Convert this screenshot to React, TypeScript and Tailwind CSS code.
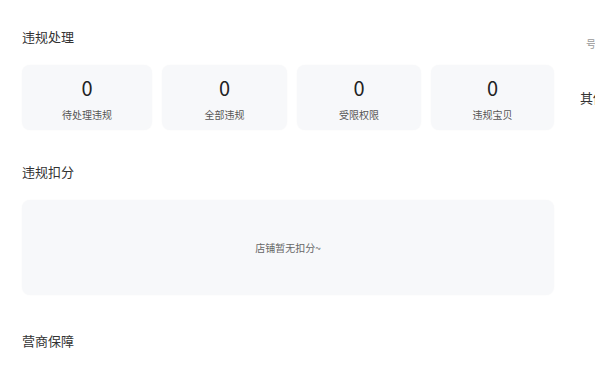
const stats = [
  { value: 0, label: "待处理违规", w: "w-[130px]" },
  { value: 0, label: "全部违规", w: "w-[125px]" },
  { value: 0, label: "受限权限", w: "w-[124px]" },
  { value: 0, label: "违规宝贝", w: "w-[123px]" },
];

const font = {
  fontFamily: '"Noto Sans CJK SC", "Noto Sans", sans-serif',
};

function SectionTitle({ children }: { children: React.ReactNode }) {
  return (
    <h2 className="text-[13px] leading-[20px] text-[#333]">{children}</h2>
  );
}

export default function App() {
  return (
    <div
      className="flex h-[379px] w-[595px] overflow-hidden bg-white"
      style={font}
    >
      {/* Left column */}
      <div className="ml-[22px] w-[532px] shrink-0 pt-[27px]">
        <SectionTitle>违规处理</SectionTitle>
        <div className="mt-[18px] flex gap-[10px]">
          {stats.map((s) => (
            <div
              key={s.label}
              className={`${s.w} flex h-[65px] flex-col items-center rounded-lg bg-[#f7f8fa] pt-[11px] shadow-[0_0_2px_rgba(0,0,0,0.03)]`}
            >
              <div className="text-[20px] leading-[24px] text-[#222]">
                {s.value}
              </div>
              <div className="mt-[8px] text-[10px] leading-[14px] text-[#555]">
                {s.label}
              </div>
            </div>
          ))}
        </div>

        <div className="mt-[32px]">
          <SectionTitle>违规扣分</SectionTitle>
        </div>
        <div className="mt-[18px] flex h-[95px] items-center justify-center rounded-lg bg-[#f7f8fa] shadow-[0_0_2px_rgba(0,0,0,0.03)]">
          <span className="text-[10px] leading-[14px] text-[#666]">
            店铺暂无扣分~
          </span>
        </div>

        <div className="mt-[36px]">
          <SectionTitle>营商保障</SectionTitle>
        </div>
      </div>

      {/* Right column (cut off) */}
      <div className="ml-[26px] shrink-0 pt-[37px]">
        <div className="ml-[6px] whitespace-nowrap text-[10px] leading-[14px] text-[#999]">
          号码信息
        </div>
        <div className="mt-[37px] whitespace-nowrap text-[13px] leading-[20px] text-[#333]">
          其他信息
        </div>
      </div>
    </div>
  );
}
